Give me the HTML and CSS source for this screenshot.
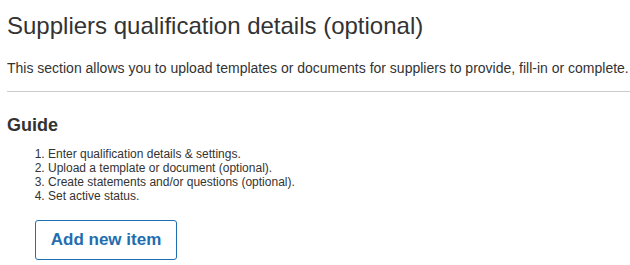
FILE: index.html
```html
<!DOCTYPE html>
<html lang="en">
<head>
  <meta charset="UTF-8">
  <title>Suppliers qualification details</title>
  <link rel="stylesheet" href="styles.css">
</head>
<body>
  <h1 class="page-title">Suppliers qualification details (optional)</h1>
  <p class="intro">This section allows you to upload templates or documents for suppliers to provide, fill-in or complete.</p>
  <hr class="divider">

  <div class="guide">
    <h2>Guide</h2>
    <ol class="guide-steps">
      <li>Enter qualification details &amp; settings.</li>
      <li>Upload a template or document (optional).</li>
      <li>Create statements and/or questions (optional).</li>
      <li>Set active status.</li>
    </ol>
    <button class="add-item">Add new item</button>
  </div>
</body>
</html>
```

FILE: styles.css
```css
body {
  font-family: "Liberation Sans", Arial, sans-serif;
  color: #333;
  margin: 0;
  padding: 0 0 0 7px;
}

.page-title {
  font-size: 24px;
  font-weight: normal;
  margin: 11px 0 0;
  line-height: 30px;
}

.intro {
  font-size: 14px;
  margin: 19px 0 0;
  line-height: 16px;
}

.divider {
  border: none;
  border-top: 1px solid #ccc;
  margin: 15px 0 0;
}

.guide h2 {
  font-size: 18px;
  margin: 22px 0 0;
  line-height: 22px;
}

.guide-steps {
  font-size: 12px;
  line-height: 14px;
  margin: 11px 0 0;
  padding-left: 41px;
}

.add-item {
  margin: 17px 0 0 28px;
  width: 142px;
  height: 40px;
  background: #fff;
  border: 1px solid #1f6eb0;
  border-radius: 3px;
  color: #1f6eb0;
  font-family: "Liberation Sans", Arial, sans-serif;
  font-size: 17px;
  font-weight: bold;
  cursor: pointer;
}
```
